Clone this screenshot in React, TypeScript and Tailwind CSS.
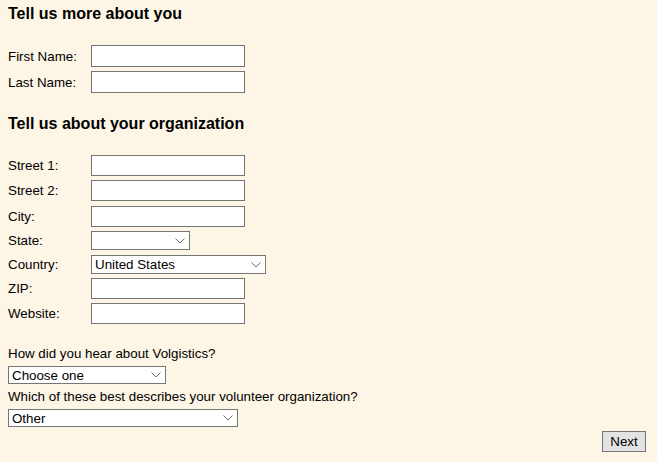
import React from "react";

function Chevron() {
  return (
    <svg width="10" height="6" viewBox="0 0 10 6" className="shrink-0">
      <polyline points="0.5,0.5 5,5 9.5,0.5" fill="none" stroke="#6b6b6b" strokeWidth="1" />
    </svg>
  );
}

function FakeSelect({ value, width, height }: { value: string; width: string; height: string }) {
  return (
    <div
      className={`${width} ${height} flex items-center justify-between border border-[#767676] bg-white pl-[3px] pr-[4px] leading-[15px]`}
    >
      <span>{value}</span>
      <Chevron />
    </div>
  );
}

function Row({ label, children, className = "" }: { label: string; children: React.ReactNode; className?: string }) {
  return (
    <div className={`flex items-center ${className}`}>
      <label className="w-[83px] shrink-0 leading-[15px]">{label}</label>
      {children}
    </div>
  );
}

function TextBox({ h = "h-[21px]" }: { h?: string }) {
  return <input type="text" className={`w-[154px] ${h} border border-[#767676] bg-white px-[2px] text-[13.33px] outline-none`} />;
}

export default function App() {
  return (
    <div className="min-h-screen bg-[#fdf5e6] pl-2 pr-[11px] font-['Liberation_Sans',Arial,sans-serif] text-[13.33px] text-black">
      <h2 className="pt-[5px] text-[16px] font-bold leading-[18px]">Tell us more about you</h2>
      <div className="mt-[22px] flex flex-col">
        <Row label="First Name:">
          <TextBox h="h-[22px]" />
        </Row>
        <Row label="Last Name:" className="mt-[4px]">
          <TextBox h="h-[22px]" />
        </Row>
      </div>

      <h2 className="mt-[22px] text-[16px] font-bold leading-[18px]">Tell us about your organization</h2>
      <div className="mt-[22px] flex flex-col">
        <Row label="Street 1:">
          <TextBox />
        </Row>
        <Row label="Street 2:" className="mt-[4px]">
          <TextBox />
        </Row>
        <Row label="City:" className="mt-[5px]">
          <TextBox />
        </Row>
        <Row label="State:" className="mt-[4px]">
          <FakeSelect value="" width="w-[99px]" height="h-[19px]" />
        </Row>
        <Row label="Country:" className="mt-[5px]">
          <FakeSelect value="United States" width="w-[175px]" height="h-[19px]" />
        </Row>
        <Row label="ZIP:" className="mt-[4px]">
          <TextBox />
        </Row>
        <Row label="Website:" className="mt-[4px]">
          <TextBox />
        </Row>
      </div>

      <p className="mt-[22px] leading-[15px]">How did you hear about Volgistics?</p>
      <div className="mt-[5px]">
        <FakeSelect value="Choose one" width="w-[158px]" height="h-[18px]" />
      </div>
      <p className="mt-[5px] leading-[15px]">Which of these best describes your volunteer organization?</p>
      <div className="mt-[5px]">
        <FakeSelect value="Other" width="w-[230px]" height="h-[18px]" />
      </div>
      <div className="mt-[4px] flex justify-end">
        <button
          type="button"
          className="h-[21px] w-[44px] border border-[#767676] bg-[#e3e3e3] text-[13.33px] leading-[15px] text-black"
        >
          Next
        </button>
      </div>
    </div>
  );
}
